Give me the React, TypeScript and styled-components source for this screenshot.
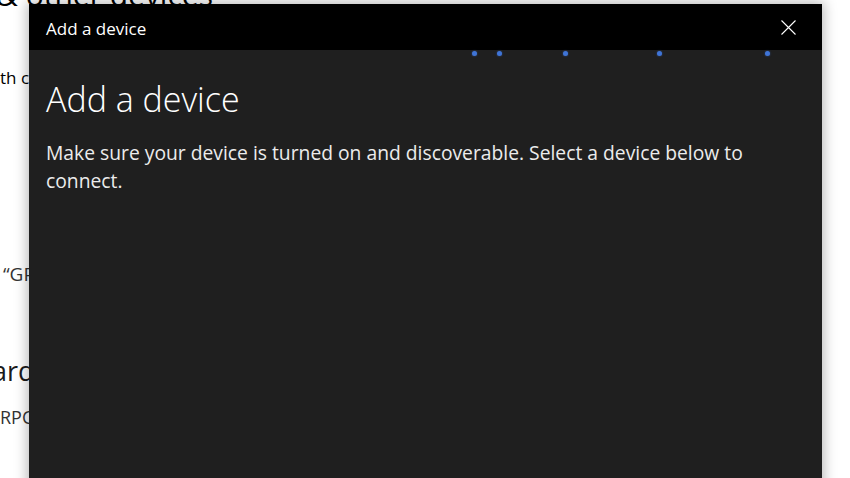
import React from "react";
import styled, { createGlobalStyle } from "styled-components";

const Global = createGlobalStyle`
  html, body { margin: 0; padding: 0; background: #ffffff; overflow: hidden; }
  body { width: 850px; height: 478px; font-family: "Open Sans", "Noto Sans", sans-serif; }
`;

const Page = styled.div`
  position: relative;
  width: 850px;
  height: 478px;
  overflow: hidden;
  background: #ffffff;
`;

const Settings = styled.div`
  display: flex;
  flex-direction: column;
  color: #000;
`;

const PageTitle = styled.div`
  font-size: 30px;
  font-weight: 400;
  line-height: 40px;
  height: 40px;
  margin-top: -25px;
  margin-left: -4px;
  white-space: nowrap;
`;

const Para = styled.div<{ $top: number; $size: number; $lh: number; $shift?: number; $color?: string }>`
  font-size: ${(p) => p.$size}px;
  line-height: ${(p) => p.$lh}px;
  height: ${(p) => p.$lh}px;
  margin-top: ${(p) => p.$top}px;
  margin-left: ${(p) => p.$shift ?? 0}px;
  color: ${(p) => p.$color ?? "#000"};
  white-space: nowrap;
`;

const Dialog = styled.div`
  position: absolute;
  left: 29px;
  top: 4px;
  width: 793px;
  height: 520px;
  background: #1f1f1f;
  box-shadow: 0 0 12px 2px rgba(0, 0, 0, 0.28);
  display: flex;
  flex-direction: column;
`;

const TitleBar = styled.div`
  height: 46px;
  flex: none;
  background: #000000;
  display: flex;
  align-items: center;
  justify-content: space-between;
  padding: 0 11px 0 17px;
`;

const TitleText = styled.span`
  color: #ffffff;
  font-size: 17px;
  line-height: 20px;
  margin-top: 3px;
`;

const CloseButton = styled.button`
  width: 46px;
  height: 46px;
  border: none;
  background: transparent;
  display: flex;
  align-items: center;
  justify-content: center;
  padding: 0;
  cursor: pointer;
`;

const Body = styled.div`
  position: relative;
  flex: 1;
  padding: 27px 17px 0 17px;
  display: flex;
  flex-direction: column;
`;

const Dot = styled.span`
  position: absolute;
  top: 1px;
  width: 5px;
  height: 5px;
  border-radius: 50%;
  background: #3f74d6;
  box-shadow: 0 0 2px rgba(63, 116, 214, 0.6);
`;

const Heading = styled.h1`
  margin: 0;
  color: #ffffff;
  font-size: 34px;
  font-weight: 300;
  line-height: 44px;
`;

const Description = styled.p`
  margin: 18px 0 0 0;
  color: #ececec;
  font-size: 19.3px;
  line-height: 28px;
  font-weight: 400;
`;

const dots = [474, 499, 565, 659, 767];

export default function App() {
  return (
    <Page>
      <Global />
      <Settings>
        <PageTitle>&amp; other devices</PageTitle>
        <Para $top={51} $size={17} $lh={24}>th connected devices</Para>
        <Para $top={171} $size={19} $lh={26} $shift={3} $color="#333">“GPO” is discoverable</Para>
        <Para $top={66} $size={27} $lh={36} $shift={-8} $color="#1a1a1a">ard</Para>
        <Para $top={16} $size={18} $lh={24} $color="#333">RPC</Para>
      </Settings>
      <Dialog>
        <TitleBar>
          <TitleText>Add a device</TitleText>
          <CloseButton aria-label="Close">
            <svg width="15" height="15" viewBox="0 0 15 15">
              <path d="M0.5 0.5 L14.5 14.5 M14.5 0.5 L0.5 14.5" stroke="#ffffff" strokeWidth="1.1" />
            </svg>
          </CloseButton>
        </TitleBar>
        <Body>
          {dots.map((x) => (
            <Dot key={x} style={{ left: x - 29 - 2.5 }} />
          ))}
          <Heading>Add a device</Heading>
          <Description>
            Make sure your device is turned on and discoverable. Select a device below to connect.
          </Description>
        </Body>
      </Dialog>
    </Page>
  );
}
